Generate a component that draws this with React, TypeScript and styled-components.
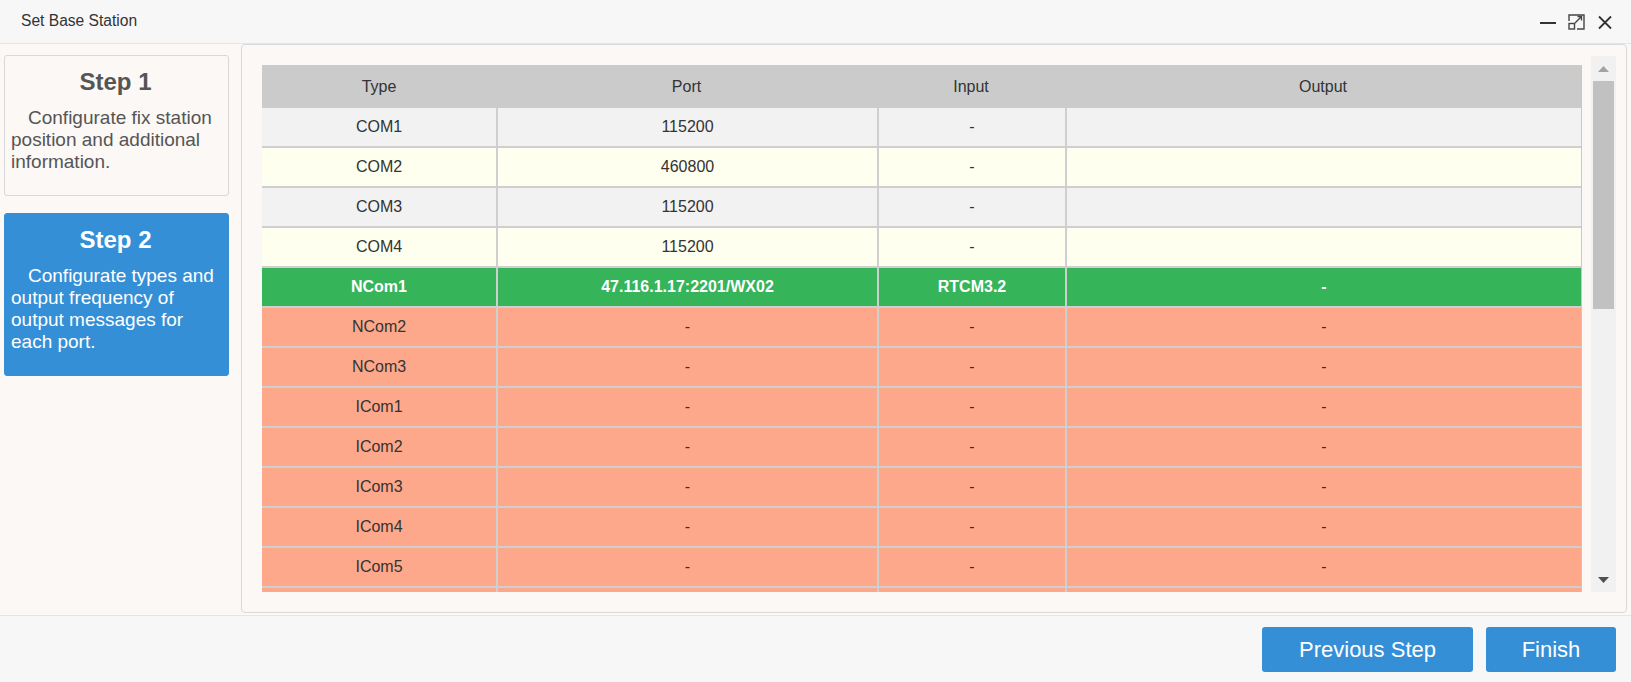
import React from "react";
import styled, { createGlobalStyle } from "styled-components";

const GlobalStyle = createGlobalStyle`
  html, body { margin: 0; padding: 0; }
  body {
    font-family: "Liberation Sans", Arial, Helvetica, sans-serif;
    color: #333;
    background: #f7f7f7;
  }
  * { box-sizing: border-box; }
`;

const Window = styled.div`
  width: 1631px;
  height: 682px;
  display: flex;
  flex-direction: column;
  overflow: hidden;
`;

const TitleBar = styled.div`
  height: 44px;
  flex: 0 0 44px;
  background: #f7f7f7;
  border-bottom: 1px solid #e4e4e4;
  display: flex;
  align-items: center;
  justify-content: space-between;
  padding: 0 19px 0 21px;
`;

const Title = styled.div`
  font-size: 15.6px;
  color: #333;
  margin-top: -2px;
`;

const Controls = styled.div`
  display: flex;
  align-items: center;
  gap: 12px;
  color: #333;
  margin-top: 1px;
`;

const CtrlIcon = styled.svg`
  display: block;
`;

const Body = styled.div`
  height: 571px;
  flex: 0 0 571px;
  background: #fbf8f5;
  display: flex;
  padding: 0 4px 2px 4px;
`;

const Sidebar = styled.div`
  width: 225px;
  flex: 0 0 225px;
  padding-top: 11px;
  display: flex;
  flex-direction: column;
  gap: 17px;
`;

const StepCard = styled.div<{ $active?: boolean }>`
  border: 1px solid ${(p) => (p.$active ? "#348fd7" : "#d8d8d8")};
  background: ${(p) => (p.$active ? "#348fd7" : "#fbf8f5")};
  color: ${(p) => (p.$active ? "#ffffff" : "#555555")};
  border-radius: 3px;
  padding: 12px 6px 22px 6px;
`;

const StepTitle = styled.div`
  font-size: 24px;
  font-weight: bold;
  line-height: 28px;
  text-align: center;
  margin-left: -2px;
`;

const StepDesc = styled.div`
  margin-top: 11px;
  font-size: 19px;
  line-height: 22px;
  text-indent: 17px;
`;

const Panel = styled.div`
  margin-left: 12px;
  width: 1386px;
  flex: 0 0 1386px;
  border: 1px solid #d9d9d9;
  border-radius: 4px;
  background: #fbf8f5;
  padding: 11px 10px 20px 20px;
  display: flex;
`;

const Viewport = styled.div`
  flex: 1;
  overflow: hidden;
  padding: 9px 9px 0 0;
`;

const Table = styled.div`
  width: 1320px;
  border-right: 1px solid #c8c8c8;
`;

const cols = "234px 381px 188px 1fr";

const HeadRow = styled.div`
  display: grid;
  grid-template-columns: ${cols};
  height: 43px;
  background: #cbcbcb;
`;

const HeadCell = styled.div`
  display: flex;
  align-items: center;
  justify-content: center;
  font-size: 16px;
  color: #333;
`;

type Kind = "odd" | "even" | "ok" | "bad";

const rowBg: Record<Kind, string> = {
  odd: "#f2f2f2",
  even: "#fffff0",
  ok: "#35b45a",
  bad: "#fda88b",
};

const Row = styled.div<{ $kind: Kind }>`
  display: grid;
  grid-template-columns: ${cols};
  height: 40px;
  border-bottom: 2px solid #cfcfcf;
  background: ${(p) => rowBg[p.$kind]};
  color: ${(p) => (p.$kind === "ok" ? "#ffffff" : "#333333")};
  font-weight: ${(p) => (p.$kind === "ok" ? "bold" : "normal")};
`;

const Cell = styled.div<{ $first?: boolean }>`
  display: flex;
  align-items: center;
  justify-content: center;
  font-size: 16px;
  border-left: ${(p) => (p.$first ? "none" : "2px solid #cfcfcf")};
  white-space: nowrap;
`;

const Scrollbar = styled.div`
  width: 25px;
  flex: 0 0 25px;
  background: #f1f1f1;
  display: flex;
  flex-direction: column;
  align-items: center;
`;

const ArrowBox = styled.div`
  height: 25px;
  width: 100%;
  display: flex;
  align-items: center;
  justify-content: center;
`;

const Thumb = styled.div`
  width: 21px;
  height: 228px;
  background: #c1c1c1;
`;

const Track = styled.div`
  flex: 1;
`;

const Footer = styled.div`
  flex: 1;
  background: #f7f7f7;
  border-top: 1px solid #e5e5e5;
  display: flex;
  justify-content: flex-end;
  align-items: flex-start;
  gap: 13px;
  padding: 11px 15px 0 0;
`;

const Button = styled.button<{ $w: number }>`
  width: ${(p) => p.$w}px;
  height: 45px;
  background: #348fd7;
  color: #ffffff;
  border: none;
  border-radius: 3px;
  font-family: "Liberation Sans", Arial, sans-serif;
  font-size: 22px;
  padding: 0;
  cursor: pointer;
`;

type RowData = { type: string; port: string; input: string; output: string; kind: Kind };

const rows: RowData[] = [
  { type: "COM1", port: "115200", input: "-", output: "", kind: "odd" },
  { type: "COM2", port: "460800", input: "-", output: "", kind: "even" },
  { type: "COM3", port: "115200", input: "-", output: "", kind: "odd" },
  { type: "COM4", port: "115200", input: "-", output: "", kind: "even" },
  { type: "NCom1", port: "47.116.1.17:2201/WX02", input: "RTCM3.2", output: "-", kind: "ok" },
  { type: "NCom2", port: "-", input: "-", output: "-", kind: "bad" },
  { type: "NCom3", port: "-", input: "-", output: "-", kind: "bad" },
  { type: "ICom1", port: "-", input: "-", output: "-", kind: "bad" },
  { type: "ICom2", port: "-", input: "-", output: "-", kind: "bad" },
  { type: "ICom3", port: "-", input: "-", output: "-", kind: "bad" },
  { type: "ICom4", port: "-", input: "-", output: "-", kind: "bad" },
  { type: "ICom5", port: "-", input: "-", output: "-", kind: "bad" },
  { type: "ICom6", port: "-", input: "-", output: "-", kind: "bad" },
];

export default function App() {
  return (
    <>
      <GlobalStyle />
      <Window>
        <TitleBar>
          <Title>Set Base Station</Title>
          <Controls>
            <CtrlIcon width="16" height="16" viewBox="0 0 16 16">
              <line x1="0" y1="9" x2="16" y2="9" stroke="#333" strokeWidth="2" />
            </CtrlIcon>
            <CtrlIcon width="17" height="16" viewBox="0 0 17 16">
              <path d="M1 7 V1 H16 V15 H9" fill="none" stroke="#444" strokeWidth="1.4" />
              <rect x="1" y="9.5" width="5.5" height="5.5" fill="none" stroke="#444" strokeWidth="1.4" />
              <path d="M7 9 L13.5 2.5 M9.5 2.5 H13.5 V6.5" fill="none" stroke="#444" strokeWidth="1.4" />
            </CtrlIcon>
            <CtrlIcon width="14" height="15" viewBox="0 0 14 15" style={{ marginLeft: 1 }}>
              <path d="M1 1.5 L13 13.5 M13 1.5 L1 13.5" fill="none" stroke="#333" strokeWidth="1.8" />
            </CtrlIcon>
          </Controls>
        </TitleBar>
        <Body>
          <Sidebar>
            <StepCard>
              <StepTitle>Step 1</StepTitle>
              <StepDesc>Configurate fix station position and additional information.</StepDesc>
            </StepCard>
            <StepCard $active>
              <StepTitle>Step 2</StepTitle>
              <StepDesc>Configurate types and output frequency of output messages for each port.</StepDesc>
            </StepCard>
          </Sidebar>
          <Panel>
            <Viewport>
              <Table>
                <HeadRow>
                  <HeadCell>Type</HeadCell>
                  <HeadCell>Port</HeadCell>
                  <HeadCell>Input</HeadCell>
                  <HeadCell>Output</HeadCell>
                </HeadRow>
                {rows.map((r) => (
                  <Row key={r.type} $kind={r.kind}>
                    <Cell $first>{r.type}</Cell>
                    <Cell>{r.port}</Cell>
                    <Cell>{r.input}</Cell>
                    <Cell>{r.output}</Cell>
                  </Row>
                ))}
              </Table>
            </Viewport>
            <Scrollbar>
              <ArrowBox>
                <svg width="11" height="6" viewBox="0 0 11 6">
                  <polygon points="0,6 11,6 5.5,0" fill="#a3a3a3" />
                </svg>
              </ArrowBox>
              <Thumb />
              <Track />
              <ArrowBox>
                <svg width="11" height="6" viewBox="0 0 11 6">
                  <polygon points="0,0 11,0 5.5,6" fill="#505050" />
                </svg>
              </ArrowBox>
            </Scrollbar>
          </Panel>
        </Body>
        <Footer>
          <Button $w={211}>Previous Step</Button>
          <Button $w={130}>Finish</Button>
        </Footer>
      </Window>
    </>
  );
}
